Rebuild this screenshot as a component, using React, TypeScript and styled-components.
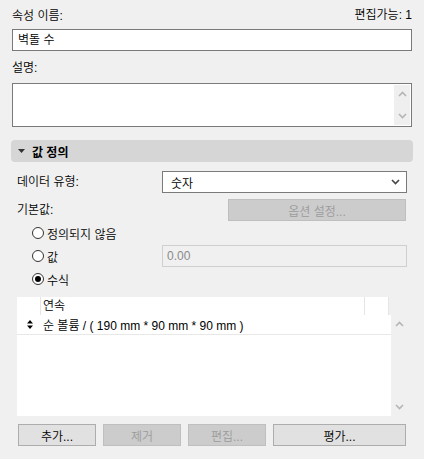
import styled, { createGlobalStyle } from "styled-components";

const GlobalStyle = createGlobalStyle`
  html, body {
    margin: 0;
    padding: 0;
    background: #f0f0f0;
  }
  body {
    font-family: "Liberation Sans", "Noto Sans CJK KR", sans-serif;
    font-size: 12px;
    font-weight: 350;
    color: #000;
  }
`;

const Panel = styled.div`
  width: 424px;
  height: 459px;
  box-sizing: border-box;
  padding: 8px 12px 0 12px;
  display: flex;
  flex-direction: column;
`;

const TopRow = styled.div`
  display: flex;
  justify-content: space-between;
  align-items: flex-start;
  height: 16px;
  line-height: 16px;
`;

const Label = styled.div<{ $mt?: number }>`
  line-height: 16px;
  height: 16px;
  margin-top: ${(p) => p.$mt ?? 0}px;
  white-space: nowrap;
`;

const EditCount = styled.div`
  margin-top: -1px;
`;

const TextBox = styled.div`
  margin-top: 5px;
  height: 22px;
  box-sizing: border-box;
  border: 1px solid #7a7a7a;
  background: #fff;
  padding: 0 5px;
  line-height: 20px;
`;

const Memo = styled.div`
  margin-top: 7px;
  height: 44px;
  box-sizing: border-box;
  border: 1px solid #7a7a7a;
  background: #fff;
  display: flex;
  justify-content: flex-end;
  padding: 1px;
`;

const ScrollTrack = styled.div<{ $bg: string }>`
  width: 16px;
  background: ${(p) => p.$bg};
  display: flex;
  flex-direction: column;
  justify-content: space-between;
  align-items: center;
  padding: 6px 0;
  box-sizing: border-box;
`;

const SectionHeader = styled.div`
  margin: 13px -1px 0 -1px;
  height: 22px;
  border-radius: 4px;
  background: #d6d6d6;
  display: flex;
  align-items: center;
  padding-left: 7px;
  gap: 7px;
  font-weight: bold;
`;

const FieldRow = styled.div<{ $mt: number; $cols: string }>`
  margin-top: ${(p) => p.$mt}px;
  padding: 0 5px;
  display: grid;
  grid-template-columns: ${(p) => p.$cols};
  align-items: center;
  height: 22px;
`;

const Select = styled.div`
  height: 22px;
  box-sizing: border-box;
  border: 1px solid #7a7a7a;
  background: #fff;
  display: flex;
  align-items: center;
  justify-content: space-between;
  padding: 0 6px 0 8px;
`;

const FlatButton = styled.div<{ $disabled?: boolean }>`
  height: 22px;
  box-sizing: border-box;
  border: 1px solid ${(p) => (p.$disabled ? "#bfbfbf" : "#adadad")};
  background: ${(p) => (p.$disabled ? "#cccccc" : "#e1e1e1")};
  color: ${(p) => (p.$disabled ? "#9b9b9b" : "#000")};
  display: flex;
  align-items: center;
  justify-content: center;
`;

const RadioList = styled.div`
  margin-top: 1px;
  display: flex;
  flex-direction: column;
  gap: 1px;
  padding-left: 20px;
  padding-right: 5px;
`;

const RadioRow = styled.div`
  height: 22px;
  display: grid;
  grid-template-columns: 130px 1fr;
  align-items: center;
`;

const RadioLabel = styled.div`
  display: flex;
  align-items: center;
  gap: 3px;
`;

const RadioCircle = styled.span<{ $checked?: boolean }>`
  width: 12px;
  height: 12px;
  box-sizing: border-box;
  border-radius: 50%;
  border: 1px solid #333;
  background: #fff;
  display: flex;
  align-items: center;
  justify-content: center;
  &::after {
    content: "";
    width: 6px;
    height: 6px;
    border-radius: 50%;
    background: #000;
    display: ${(p) => (p.$checked ? "block" : "none")};
  }
`;

const ValueInput = styled.div`
  height: 22px;
  box-sizing: border-box;
  border: 1px solid #cfcfcf;
  background: #f0f0f0;
  color: #8a8a8a;
  padding: 0 4px;
  line-height: 20px;
`;

const Table = styled.div`
  margin: 7px 5px 0 5px;
  height: 119px;
  display: grid;
  grid-template-columns: 1fr 16px;
  grid-template-rows: 18px 1fr;
`;

const HeaderRow = styled.div`
  background: #fff;
  display: grid;
  grid-template-columns: 24px 1fr 24px;
  margin-right: 2px;
`;

const HeaderCell = styled.div`
  border-right: 1px solid #e5e5e5;
  line-height: 18px;
  padding-left: 2px;
`;

const Body = styled.div`
  background: #fff;
  grid-column: 1;
`;

const DataRow = styled.div`
  height: 19px;
  border-bottom: 1px solid #e8e8e8;
  display: grid;
  grid-template-columns: 26px 1fr;
  align-items: center;
`;

const SortHandle = styled.div`
  display: flex;
  justify-content: center;
`;

const ButtonBar = styled.div`
  margin-top: 8px;
  padding: 0 6px;
  display: grid;
  grid-template-columns: 78px 78px 78px 1fr;
  gap: 7px;
`;

const Chevron = ({ up, color = "#b5b5b5" }: { up?: boolean; color?: string }) => (
  <svg width="9" height="6" viewBox="0 0 9 6">
    <path
      d={up ? "M1 5 L4.5 1.5 L8 5" : "M1 1 L4.5 4.5 L8 1"}
      stroke={color}
      strokeWidth="1.6"
      fill="none"
    />
  </svg>
);

export default function App() {
  return (
    <>
      <GlobalStyle />
      <Panel>
        <TopRow>
          <Label>속성 이름:</Label>
          <EditCount>편집가능: 1</EditCount>
        </TopRow>
        <TextBox>벽돌 수</TextBox>
        <Label $mt={9}>설명:</Label>
        <Memo>
          <ScrollTrack $bg="#efefef">
            <Chevron up />
            <Chevron />
          </ScrollTrack>
        </Memo>

        <SectionHeader>
          <svg width="7" height="4" viewBox="0 0 7 4">
            <path d="M0 0 L7 0 L3.5 4 Z" fill="#333" />
          </svg>
          값 정의
        </SectionHeader>

        <FieldRow $mt={9} $cols="145px 1fr">
          <Label>데이터 유형:</Label>
          <Select>
            숫자
            <Chevron color="#444" />
          </Select>
        </FieldRow>

        <FieldRow $mt={6} $cols="211px 178px 1fr">
          <Label>기본값:</Label>
          <FlatButton $disabled>옵션 설정...</FlatButton>
        </FieldRow>

        <RadioList>
          <RadioRow>
            <RadioLabel>
              <RadioCircle />
              정의되지 않음
            </RadioLabel>
          </RadioRow>
          <RadioRow>
            <RadioLabel>
              <RadioCircle />값
            </RadioLabel>
            <ValueInput>0.00</ValueInput>
          </RadioRow>
          <RadioRow>
            <RadioLabel>
              <RadioCircle $checked />
              수식
            </RadioLabel>
          </RadioRow>
        </RadioList>

        <Table>
          <HeaderRow>
            <HeaderCell />
            <HeaderCell>연속</HeaderCell>
            <HeaderCell />
          </HeaderRow>
          <div />
          <Body>
            <DataRow>
              <SortHandle>
                <svg width="6" height="9" viewBox="0 0 6 9">
                  <path d="M0 3.5 L3 0 L6 3.5 Z M0 5.5 L3 9 L6 5.5 Z" fill="#000" />
                </svg>
              </SortHandle>
              <div>순 볼륨 / ( 190 mm * 90 mm * 90 mm )</div>
            </DataRow>
          </Body>
          <ScrollTrack $bg="#f0f0f0">
            <Chevron up />
            <Chevron />
          </ScrollTrack>
        </Table>

        <ButtonBar>
          <FlatButton>추가...</FlatButton>
          <FlatButton $disabled>제거</FlatButton>
          <FlatButton $disabled>편집...</FlatButton>
          <FlatButton>평가...</FlatButton>
        </ButtonBar>
      </Panel>
    </>
  );
}
